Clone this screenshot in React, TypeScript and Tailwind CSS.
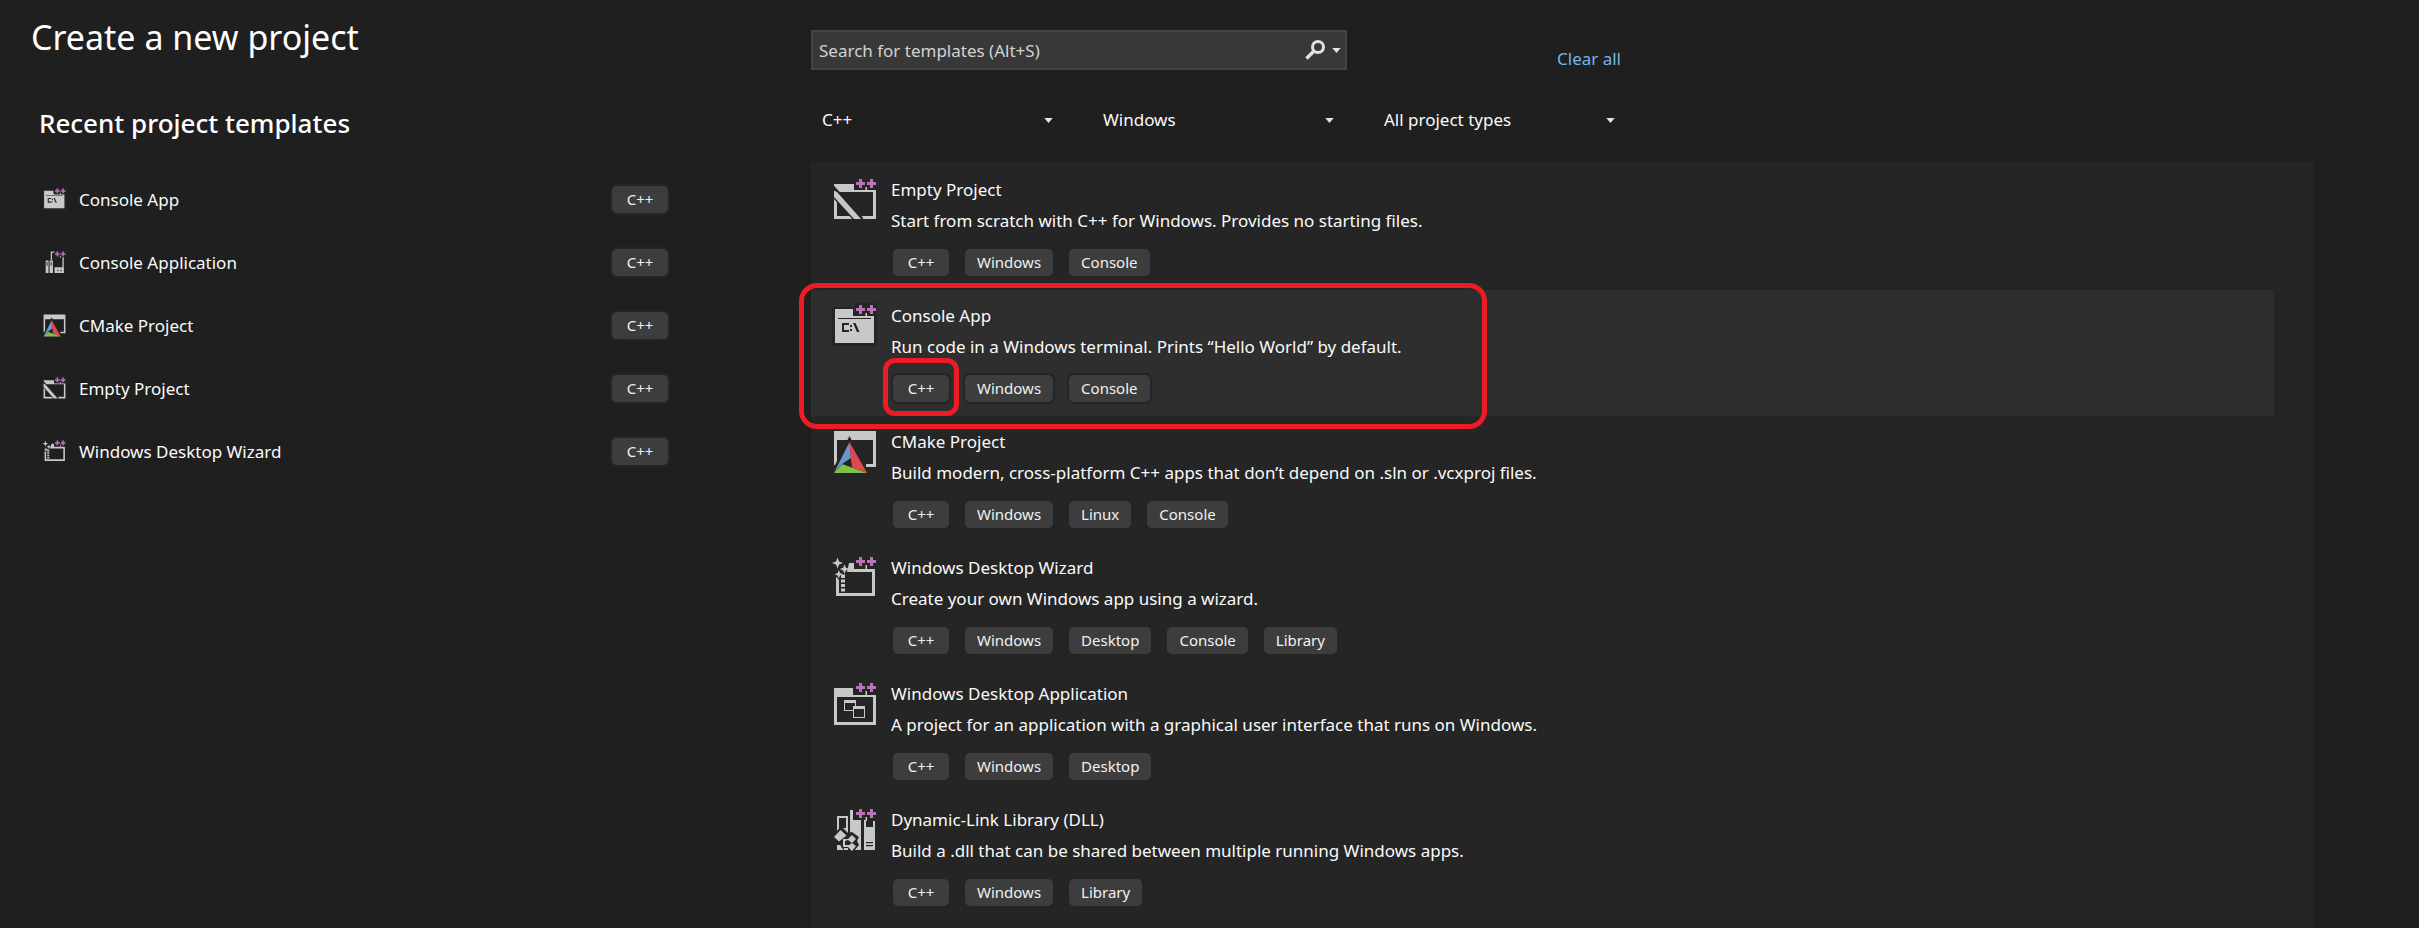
import type { ReactNode } from "react";

type IconName = "empty" | "console" | "consoleApp" | "cmake" | "wizard" | "desktop" | "dll";

const FG = "#c8c8c8";
const BG = "#252525";

function PlusPlus() {
  return (
    <g>
      <path d="M30 7h22v13H30z" fill={BG} />
      <path d="M40.5 17h1.5v4h-1.5z" fill={FG} />
      <path
        d="M34 9h3v3h3v3h-3v3h-3v-3h-3v-3h3zM45 9h3v3h3v3h-3v3h-3v-3h-3v-3h3z"
        fill="#bb72bb"
      />
    </g>
  );
}

const drawings: Record<IconName, ReactNode> = {
  empty: (
    <g>
      <path d="M9 14h20v6h22v29H9zM12 22v24h36V22z" fill={FG} fillRule="evenodd" />
      <path d="M5 18L35 51" stroke={BG} strokeWidth="9" />
      <path d="M9 20.5L12 22L36 49H29L9 27z" fill={FG} />
      <PlusPlus />
    </g>
  ),
  console: (
    <g>
      <path d="M7 11h24v6h21v33H7z" fill={BG} />
      <path d="M10 13h18v7h21v27H10z" fill={FG} />
      <path d="M13 22h33v1H13z" fill={BG} />
      <path d="M17 27h7v2h-5v5h5v2h-7zM25 29h2v2h-2zM25 33h2v2h-2zM28 27h2.5l4 9H32z" fill={BG} />
      <PlusPlus />
    </g>
  ),
  consoleApp: (
    <g>
      <path d="M24 25V10h6M46.5 19v21" stroke={FG} strokeWidth="2.5" fill="none" />
      <path d="M13 26h5.5v24H13zM20.5 26H27v24h-6.500zM30 39h18v11H30z" fill={FG} />
      <path d="M14.500 29h2.500v7h-2.500zM22.500 29H25v7h-2.500zM35 44h3v3h-3zM41 44h3v3h-3z" fill="#555" />
      <PlusPlus />
    </g>
  ),
  cmake: (
    <g transform="translate(0 2)">
      <path d="M9 7h42v36H41v-3h7V16H12v25H9z" fill={FG} />
      <path d="M24.500 12L5 51h39z" fill={BG} />
      <path d="M24.500 18L9 49l8-9l9-6z" fill="#6a96cf" />
      <path d="M24.500 18L42 49L26.500 43z" fill="#e0484e" />
      <path d="M9 49l8.500-9L42 49z" fill="#7fc14b" />
      <path d="M25.800 34L18 40.200l9 3z" fill={BG} />
    </g>
  ),
  wizard: (
    <g transform="translate(0 2)">
      <path d="M24 13h5v6h21v27H11V27h3v16h33V22H22z" fill={FG} />
      <path d="M16 24.500h4V28h-4zM16 29.500h4v3h-4zM16 34h4v3h-4zM16 38.500h4v3h-4z" fill={FG} />
      <path d="M12.500 5l2.500 6l4 2l-4 3l5 3l-3 4l-3 7l-4-5l1-8l-3-4z" fill={BG} />
      <path
        d="M12.500 7.500l1.500 4l4 1.500l-4 1.500l-1.500 4l-1.500-4l-4-1.500l4-1.500zM19.500 14.500l1.400 3.200l3.600 1.300l-3.600 1.400l-1.400 3.600l-1.400-3.600l-3.200-1.400l3.200-1.300zM13.800 20l1.200 3l3 1.200l-3 1.300l-1.200 3l-1.200-3l-3-1.300l3-1.200z"
        fill={FG}
      />
      <g transform="translate(0 -2)">
        <PlusPlus />
      </g>
    </g>
  ),
  desktop: (
    <g transform="translate(0 2)">
      <path d="M9 12h19v7h23v30H9zM12 21v25h36V21z" fill={FG} fillRule="evenodd" />
      <path d="M19 24h12v11H19zM20 27v7h10v-7z" fill={FG} fillRule="evenodd" />
      <path d="M28 30h12v12H28zM29 33v8h10v-8z" fill={FG} fillRule="evenodd" />
      <path d="M29 33h10v8H29z" fill={BG} />
      <g transform="translate(0 -2)">
        <PlusPlus />
      </g>
    </g>
  ),
  dll: (
    <g transform="translate(0 2)">
      <path d="M12 14h11v34H12zM14 16v10h7V16z" fill={FG} fillRule="evenodd" />
      <path d="M25 8h3v10h8v30H25zM39 18h2v7h7v-6h2v29H39z" fill={FG} />
      <path d="M41 40h7v1.200h-7zM41 43h7v1.200h-7z" fill={BG} />
      <path d="M16 24l7 7l4-1l7 5l-2 4l2 4l-6 7l-4-4h-5v2l-3-3v-2l-3 3l-5-5v-7z" fill={BG} />
      <path d="M15.500 28l6 5.500l-7.500 6l-5-4.500zM27 33l4 4l-4 4l-4-3l-3 1v4h4l3-2l4 3l-4 5l-4-4h-5v-8h5zM12 43h3v5h-3z" fill={FG} />
      <g transform="translate(0 -2)">
        <PlusPlus />
      </g>
    </g>
  ),
};

function TemplateIcon({ name, className }: { name: IconName; className: string }) {
  return (
    <svg viewBox="6 6 48 48" className={`shrink-0 ${className}`} aria-hidden="true">
      {drawings[name]}
    </svg>
  );
}

function Caret({ className = "" }: { className?: string }) {
  return (
    <svg viewBox="0 0 10 6" className={`h-[5px] w-[9px] ${className}`} aria-hidden="true">
      <path d="M0 0h10L5 6z" fill="#e6e6e6" />
    </svg>
  );
}

function Tag({ children }: { children: ReactNode }) {
  return (
    <span className="flex h-[27px] min-w-14 items-center justify-center rounded-[5px] bg-[#3d3d3d] px-3 text-[15px] leading-[27px] text-[#f1f1f1] ring-2 ring-[#252525]">
      {children}
    </span>
  );
}

const recent: { name: string; icon: IconName }[] = [
  { name: "Console App", icon: "console" },
  { name: "Console Application", icon: "consoleApp" },
  { name: "CMake Project", icon: "cmake" },
  { name: "Empty Project", icon: "empty" },
  { name: "Windows Desktop Wizard", icon: "wizard" },
];

const templates: { name: string; icon: IconName; text: string; tags: string[]; selected?: boolean }[] = [
  {
    name: "Empty Project",
    icon: "empty",
    text: "Start from scratch with C++ for Windows. Provides no starting files.",
    tags: ["C++", "Windows", "Console"],
  },
  {
    name: "Console App",
    icon: "console",
    text: "Run code in a Windows terminal. Prints “Hello World” by default.",
    tags: ["C++", "Windows", "Console"],
    selected: true,
  },
  {
    name: "CMake Project",
    icon: "cmake",
    text: "Build modern, cross-platform C++ apps that don’t depend on .sln or .vcxproj files.",
    tags: ["C++", "Windows", "Linux", "Console"],
  },
  {
    name: "Windows Desktop Wizard",
    icon: "wizard",
    text: "Create your own Windows app using a wizard.",
    tags: ["C++", "Windows", "Desktop", "Console", "Library"],
  },
  {
    name: "Windows Desktop Application",
    icon: "desktop",
    text: "A project for an application with a graphical user interface that runs on Windows.",
    tags: ["C++", "Windows", "Desktop"],
  },
  {
    name: "Dynamic-Link Library (DLL)",
    icon: "dll",
    text: "Build a .dll that can be shared between multiple running Windows apps.",
    tags: ["C++", "Windows", "Library"],
  },
];

const filters = [
  { label: "Language", value: "C++" },
  { label: "Platform", value: "Windows" },
  { label: "Project type", value: "All project types" },
];

export default function App() {
  return (
    <div className="flex min-h-screen bg-[#1f1f1f] font-['Noto_Sans','Open_Sans',sans-serif] text-[17px] leading-6 text-[#fafafa]">
      <aside className="w-[811px] shrink-0">
        <h1 className="pt-[13px] pl-[31px] text-[34px] leading-[48px] text-white">Create a new project</h1>
        <h2 className="pt-[43px] pl-[39px] text-[26px] leading-[38px] font-medium text-white">Recent project templates</h2>
        <ul className="mt-[26px] ml-[42px] w-[626px]">
          {recent.map((item) => (
            <li key={item.name}>
              <button type="button" className="flex h-[63px] w-full items-center text-left">
                <TemplateIcon name={item.icon} className="size-[25px]" />
                <span className="ml-3 flex-1 pt-px">{item.name}</span>
                <Tag>C++</Tag>
              </button>
            </li>
          ))}
        </ul>
      </aside>

      <main className="mr-[106px] flex min-w-0 flex-1 flex-col">
        <div className="flex items-start pt-[30px]">
          <div className="flex h-10 w-[536px] items-center border-2 border-[#434343] bg-[#383838] pr-1">
            <input
              type="text"
              aria-label="Search for templates"
              placeholder="Search for templates (Alt+S)"
              className="h-full min-w-0 flex-1 bg-transparent pl-[6px] outline-none placeholder:text-[#d2d2d2]"
            />
            <button type="button" aria-label="Search" className="flex items-center">
              <svg viewBox="0 0 22 22" className="size-[22px]" aria-hidden="true">
                <circle cx="14" cy="8" r="5.500" fill="none" stroke="#e0e0e0" strokeWidth="3" />
                <path d="M10 12L2.500 19.500" stroke="#e0e0e0" strokeWidth="3.500" />
              </svg>
              <Caret className="ml-[6px]" />
            </button>
          </div>
          <a href="#clear" className="mt-[17px] ml-[210px] text-[#75b5ec]">
            Clear all
          </a>
        </div>

        <div className="mt-[25px] flex h-12 gap-[38px] pl-[11px]">
          {filters.map((filter) => (
            <label key={filter.label} className="grid w-[243px] items-center">
              <select aria-label={filter.label} className="col-start-1 row-start-1 h-12 w-full appearance-none bg-transparent outline-none">
                <option>{filter.value}</option>
              </select>
              <Caret className="pointer-events-none col-start-1 row-start-1 mr-3 justify-self-end" />
            </label>
          ))}
        </div>

        <ul className="mt-[18px] flex-1 bg-[#252525] pt-[2px] pr-[39px]">
          {templates.map((item) => (
            <li
              key={item.name}
              className={`relative flex h-[126px] pt-3 pl-5 ${item.selected ? "bg-[#2e2e2e]" : ""}`}
            >
              <TemplateIcon name={item.icon} className="size-12" />
              <div className="ml-3">
                <h3 className="mt-[2px] text-[17px] leading-6">{item.name}</h3>
                <p className="mt-[7px]">{item.text}</p>
                <div className="mt-4 ml-[2px] flex gap-4">
                  {item.tags.map((tag, i) => (
                    <div key={tag} className="relative">
                      <Tag>{tag}</Tag>
                      {item.selected && i === 0 && (
                        <div className="absolute -inset-x-[10px] -top-[17px] -bottom-[14px] rounded-[12px] border-[5px] border-[#ed1c24]" />
                      )}
                    </div>
                  ))}
                </div>
              </div>
              {item.selected && (
                <div className="absolute -top-[7px] -left-[12px] z-10 h-[146px] w-[688px] rounded-[18px] border-[5px] border-[#ed1c24]" />
              )}
            </li>
          ))}
        </ul>
      </main>
    </div>
  );
}
